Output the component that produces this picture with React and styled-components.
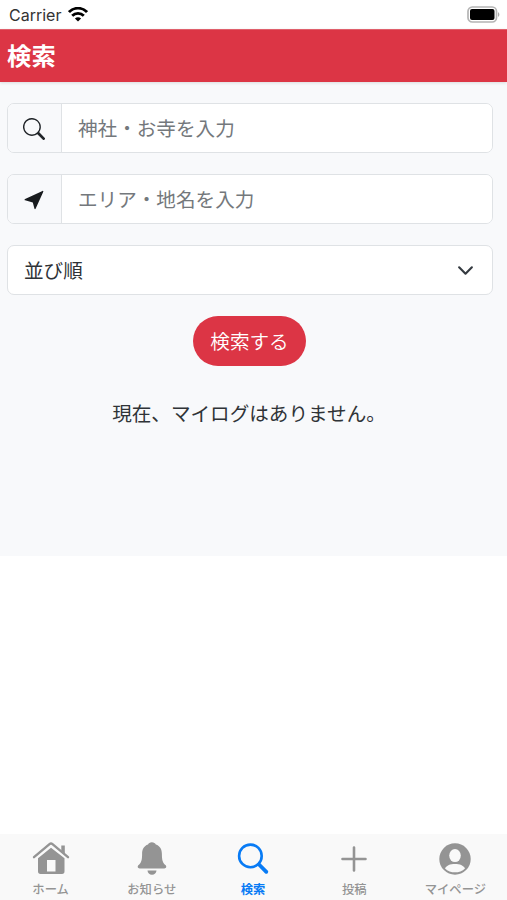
import React from "react";
import styled, { createGlobalStyle } from "styled-components";

const GlobalStyle = createGlobalStyle`
  *, *::before, *::after { box-sizing: border-box; }
  body { margin: 0; background: #fff; }
  button, input { font: inherit; }
`;

const Screen = styled.div`
  display: flex;
  flex-direction: column;
  height: 900px;
  overflow: hidden;
  background: #fff;
  color: #2f3337;
  font-family: "Noto Sans CJK JP", sans-serif;
`;

const StatusBar = styled.div`
  display: flex;
  align-items: center;
  height: 29px;
  padding: 0 7px 0 9px;
  flex: none;
  color: #333;
  font: 16px/29px Inter, sans-serif;
`;

const Carrier = styled.span`
  width: 59px;
  padding-top: 1px;
`;

const Spacer = styled.span`
  flex: 1;
`;

const Header = styled.header`
  display: flex;
  align-items: flex-start;
  height: 53px;
  padding: 0 7px;
  flex: none;
  background: #dc3545;
  border-top: 1px solid #e0606c;
  box-shadow: 0 1px 3px rgba(0, 0, 0, 0.12);
  position: relative;
`;

const Title = styled.h1`
  margin: 0;
  color: #fff;
  font-size: 24.4px;
  line-height: 50px;
  font-weight: 700;
`;

const Content = styled.main`
  display: flex;
  flex-direction: column;
  align-items: stretch;
  height: 474px;
  padding: 21px 14px 0 7px;
  flex: none;
  background: #f8f9fb;
`;

const Field = styled.label`
  display: flex;
  height: 50px;
  margin-bottom: 21px;
  border: 1px solid #dfe2e5;
  border-radius: 7px;
  background: #fff;
  overflow: hidden;
`;

const Prefix = styled.span`
  display: flex;
  align-items: center;
  justify-content: center;
  width: 54px;
  padding: 1px 1px 0 0;
  border-right: 1px solid #dfe2e5;
  background: #f8f9fb;
`;

const Input = styled.input`
  flex: 1;
  min-width: 0;
  padding: 0 16px 2px;
  border: 0;
  outline: 0;
  background: #fff;
  color: #212529;
  font-size: 19.6px;
  &::placeholder { color: #74787c; opacity: 1; }
`;

const Select = styled.button`
  display: flex;
  align-items: center;
  justify-content: space-between;
  height: 50px;
  padding: 0 18px 2px 16px;
  border: 1px solid #dfe2e5;
  border-radius: 7px;
  background: #fff;
  color: #2f3337;
  font-size: 19.6px;
`;

const Submit = styled.button`
  align-self: center;
  width: 113px;
  height: 50px;
  margin: 21px 1px 0 0;
  padding: 0 0 1px;
  border: 0;
  border-radius: 25px;
  background: #dc3545;
  color: #fff;
  font-size: 19.6px;
  font-weight: 350;
`;

const Message = styled.p`
  align-self: center;
  margin: 32px 2px 0 0;
  font-size: 19.6px;
  line-height: 29px;
  white-space: nowrap;
`;

const TabBar = styled.nav`
  display: grid;
  grid-template-columns: repeat(5, 1fr);
  height: 66px;
  margin-top: auto;
  padding-right: 1px;
  flex: none;
  background: #f9f9f9;
`;

const Tab = styled.a`
  display: flex;
  flex-direction: column;
  align-items: center;
  padding-top: 6px;
  color: ${(p) => (p.$active ? "#087bf5" : "#949494")};
  font-size: 12.3px;
  font-weight: ${(p) => (p.$active ? 700 : 500)};
  line-height: 18px;
  white-space: nowrap;
`;

const TabIcon = styled.svg`
  width: 38px;
  height: 38px;
  margin-bottom: 2px;
  flex: none;
`;

const Chevron = styled.svg`
  width: 17px;
  height: 17px;
  margin-top: 3px;
`;

const WifiIcon = () => (
  <svg width="20" height="15" viewBox="0 0 20 15" fill="none" stroke="#000" strokeWidth="2.8">
    <path d="M1 5.1C6-.1 14-.1 19 5.1M4.2 8.7c3.2-3.2 8.4-3.2 11.6 0" />
    <path d="M6.9 11.4c1.7-1.6 4.5-1.6 6.2 0L10 14.6z" fill="#000" stroke="none" />
  </svg>
);

const BatteryIcon = () => (
  <svg width="33" height="17" viewBox="0 0 33 17">
    <rect x="1" y="1" width="28.5" height="15" rx="4.3" fill="#fff" stroke="#b4b4b4" strokeWidth="1.7" />
    <rect x="3" y="3" width="24.5" height="11" rx="2" fill="#000" />
    <path d="M31 6.2c1.8.7 1.8 3.9 0 4.6z" fill="#aaa" />
  </svg>
);

const SearchIcon = () => (
  <svg width="22" height="22" viewBox="0 0 16 16" fill="#212529">
    <path d="M11.742 10.344a6.5 6.5 0 1 0-1.397 1.398h-.001c.03.04.062.078.098.115l3.85 3.85a1 1 0 0 0 1.415-1.414l-3.85-3.85a1.007 1.007 0 0 0-.115-.1zM12 6.5a5.5 5.5 0 1 1-11 0 5.5 5.5 0 0 1 11 0z" />
  </svg>
);

const ArrowIcon = () => (
  <svg width="20" height="20" viewBox="0 0 20 20" fill="#181b1e">
    <path d="M18.5 .9c.6-.3 1 .2.8.8L11.6 18.7c-.3.7-1 .6-1.2-.1L8.8 12.4 1.1 10.3c-.7-.2-.7-1 0-1.4z" />
  </svg>
);

const ChevronIcon = () => (
  <Chevron viewBox="0 0 16 16" fill="none" stroke="#343a40" strokeWidth="2" strokeLinecap="round" strokeLinejoin="round">
    <path d="m2 5 6 6 6-6" />
  </Chevron>
);

const HomeGlyph = () => (
  <>
    <path d="M2 17.2 17.5 4.1q1.5-1.2 3 0L36 17.2" fill="none" stroke="currentColor" strokeWidth="2.4" strokeLinecap="round" />
    <path d="M29.3 5.5h3.5v8.2l-3.5-3z" fill="currentColor" />
    <path fillRule="evenodd" d="M6 18.3 19 7.8l13.5 10.5v13q0 2.7-2.5 2.7H8.5Q6 34 6 31.3zM15 20v11.5h8.5V20z" fill="currentColor" />
  </>
);

const BellGlyph = () => (
  <path fill="currentColor" d="M18.8 2.3c-2 0-3 1-3.8 2.2-4.1 1.4-5.9 5-5.9 9.4 0 6.2-.9 8.8-3.5 11.2-1.6 1.4-.8 3.3 1 3.3h24.8c1.8 0 2.6-1.9 1-3.3-2.6-2.4-3.5-5-3.5-11.2 0-4.4-1.8-8-6.1-9.4-.7-1.2-1.9-2.2-4-2.2zM14.5 30.5h9c-.2 2.5-1.9 4.3-4.5 4.3s-4.3-1.8-4.5-4.3z" />
);

const MagnifierGlyph = () => (
  <g fill="none" stroke="currentColor" strokeLinecap="round">
    <circle cx="16.4" cy="15.9" r="11.3" strokeWidth="2.6" />
    <path d="m25 24.5 7.3 7.3" strokeWidth="3.8" />
  </g>
);

const PlusGlyph = () => (
  <path d="M19 7.5v23M7.5 19h23" fill="none" stroke="currentColor" strokeWidth="2.6" strokeLinecap="round" />
);

const PersonGlyph = () => (
  <>
    <circle cx="19" cy="19" r="15.7" fill="currentColor" />
    <ellipse cx="19" cy="15.6" rx="5.8" ry="6.5" fill="#f9f9f9" />
    <path d="M9 28.4c1.7-3.3 5.1-4.5 10-4.5s8.3 1.2 10 4.5c-5.2 5.2-14.8 5.2-20 0z" fill="#f9f9f9" />
  </>
);

const tabs = [
  { label: "ホーム", Glyph: HomeGlyph },
  { label: "お知らせ", Glyph: BellGlyph },
  { label: "検索", Glyph: MagnifierGlyph, active: true },
  { label: "投稿", Glyph: PlusGlyph },
  { label: "マイページ", Glyph: PersonGlyph },
];

export default function App() {
  return (
    <Screen lang="ja">
      <GlobalStyle />
      <StatusBar>
        <Carrier>Carrier</Carrier>
        <WifiIcon />
        <Spacer />
        <BatteryIcon />
      </StatusBar>
      <Header><Title>検索</Title></Header>
      <Content>
        <Field>
          <Prefix><SearchIcon /></Prefix>
          <Input placeholder="神社・お寺を入力" />
        </Field>
        <Field>
          <Prefix><ArrowIcon /></Prefix>
          <Input placeholder="エリア・地名を入力" />
        </Field>
        <Select>並び順<ChevronIcon /></Select>
        <Submit>検索する</Submit>
        <Message>現在、マイログはありません。</Message>
      </Content>
      <TabBar>
        {tabs.map(({ label, Glyph, active }) => (
          <Tab key={label} $active={active}>
            <TabIcon viewBox="0 0 38 38"><Glyph /></TabIcon>
            {label}
          </Tab>
        ))}
      </TabBar>
    </Screen>
  );
}
